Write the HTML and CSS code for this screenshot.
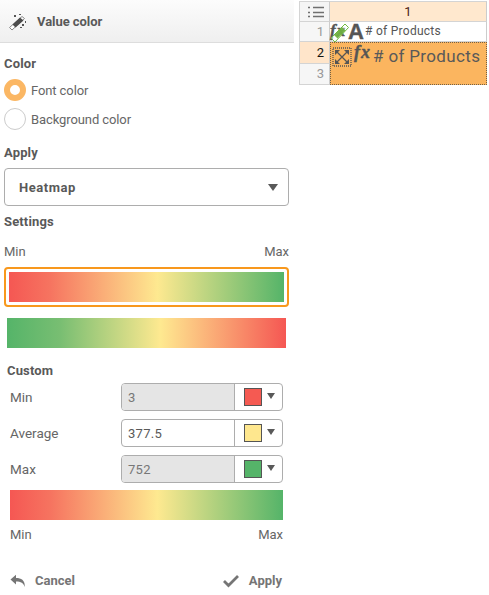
FILE: index.html
```html
<!DOCTYPE html>
<html lang="en">
<head>
<meta charset="utf-8">
<title>Value color</title>
<link rel="stylesheet" href="styles.css">
</head>
<body>
<main class="app">
  <section class="panel">
    <header class="panel-header">
      <svg class="wand" width="20" height="18" viewBox="0 0 20 18"><path d="M1.500 14.500 14 3.500l2.500 2L4 17z" fill="#fff" stroke="#888"/><path d="m4.500 11.500 7.500-7 3.500 3-8 7z" fill="#4c4c4c"/><path d="M6 2h2v2H6zM11 1h2v1h-2zM14 11h2v2h-2zM12 14h2v1h-2zM17 8h1v2h-1z" fill="#555"/></svg>
      <span class="title">Value color</span>
    </header>
    <h2 class="label color-label">Color</h2>
    <div class="radio"><i class="dot on"></i><span class="t-font">Font color</span></div>
    <div class="radio"><i class="dot"></i><span class="t-back">Background color</span></div>
    <h2 class="label apply-label">Apply</h2>
    <div class="select"><span class="t-heat">Heatmap</span><i class="caret"></i></div>
    <h2 class="label settings-label">Settings</h2>
    <div class="range"><span>Min</span><span>Max</span></div>
    <div class="choice"><div class="bar"></div></div>
    <div class="bar reverse"></div>
    <h2 class="label custom-label">Custom</h2>
    <div class="fields">
      <div class="field"><span class="name">Min</span><div class="control"><span class="value off">3</span><span class="pick"><i class="swatch red"></i><i class="caret small"></i></span></div></div>
      <div class="field"><span class="name">Average</span><div class="control"><span class="value">377.5</span><span class="pick"><i class="swatch yellow"></i><i class="caret small"></i></span></div></div>
      <div class="field"><span class="name">Max</span><div class="control"><span class="value off">752</span><span class="pick"><i class="swatch green"></i><i class="caret small"></i></span></div></div>
    </div>
    <div class="bar preview"></div>
    <div class="range bottom"><span>Min</span><span>Max</span></div>
    <footer class="actions">
      <span class="action"><svg width="15" height="14" viewBox="0 0 15 14"><path d="M.5 5.500 6 .8V4c5.800 0 9.300 2.700 8.700 9C13.500 9 11 7.500 6 7.500v3z" fill="#757575"/></svg><span>Cancel</span></span>
      <span class="action"><svg width="16" height="14" viewBox="0 0 16 14"><path d="m1 7 4.500 4.500L15 2" fill="none" stroke="#757575" stroke-width="2.800"/></svg><span>Apply</span></span>
    </footer>
  </section>
  <section class="sheet">
    <div class="cell menu"><svg width="17" height="12" viewBox="0 0 17 12"><path d="M0 1.500h2M0 6.500h2M0 10.500h2M5 1.500h11M5 6.500h11M5 10.500h11" stroke="#707070" stroke-width="1.300"/></svg></div>
    <div class="cell col">1</div>
    <div class="cell num">1</div>
    <div class="cell first"><span class="fx mini">fx<svg class="brush" width="20" height="20" viewBox="0 0 20 20"><path d="M1 15 15 1l3.500 3.500L5 19z" fill="#fff" fill-opacity=".4" stroke="#72bb42"/><path d="m4 12 8-8 3.500 3.500-8 8z" fill="#67ad38" fill-opacity=".9"/></svg></span><b class="letter">A</b><span class="t-products">#&nbsp;of Products</span></div>
    <div class="cell num current">2</div>
    <div class="cell selected"><svg class="expand" width="20" height="20" viewBox="0 0 20 20"><path d="M1 1h18v18H1z" fill="none" stroke="#555" stroke-width="1.300" stroke-dasharray="1 1"/><path d="m4 4 12 12M16 4 4 16" stroke="#555" stroke-width="1.300"/><path d="M3 3h5L3 8zM17 3v5l-5-5zM3 17v-5l5 5zM17 17h-5l5-5z" fill="#555"/></svg><span class="fx large">fx</span><span class="t-large">#&nbsp;of Products</span></div>
    <div class="cell num">3</div>
  </section>
</main>
</body>
</html>
```
FILE: styles.css
```css
* { box-sizing: border-box; }
body { margin: 0; background: #fff; color: #595959; font: 13px/18px Roboto, sans-serif; }
.app { display: flex; width: 489px; height: 595px; overflow: hidden; }
.panel { width: 294px; height: 595px; flex: none; }
.panel-header { display: flex; align-items: center; height: 43px; padding: 1px 0 0 8px; background: linear-gradient(#fcfcfc, #efefef); border-bottom: 1px solid #ddd; }
.title { margin-left: 9px; font-weight: 700; letter-spacing: -.05px; }
.label { height: 18px; margin: 0 0 0 4px; font: 700 13px/18px Roboto, sans-serif; letter-spacing: .15px; }
.color-label { margin-top: 12px; }
.radio { display: flex; align-items: center; height: 22px; margin: 6px 0 0 4px; color: #666; }
.dot { width: 22px; height: 22px; margin-right: 5px; border: 1px solid #ccc; border-radius: 50%; }
.dot.on { border: 6px solid #fbb764; }
.radio + .radio { margin-top: 7px; }
.t-font, .t-back { padding-top: 1px; letter-spacing: -.1px; }
.apply-label { margin-top: 14px; }
.select { display: flex; align-items: center; justify-content: space-between; width: 285px; height: 38px; margin: 6px 0 0 4px; padding: 0 10px 0 14px; border: 1px solid #adadad; border-radius: 4px; font-weight: 700; }
.t-heat { padding-top: 1px; letter-spacing: .55px; }
.caret { border: 5px solid transparent; border-top: 7px solid #595959; border-bottom: 0; }
.settings-label { margin-top: 7px; }
.range { display: flex; justify-content: space-between; width: 285px; margin: 12px 0 0 4px; color: #666; }
.bar { height: 30px; background: linear-gradient(90deg, #f55753, #f67460 15%, #fee990 54%, #55b469); }
.choice { width: 285px; height: 40px; margin: 6px 0 0 4px; padding: 3px; border: 2px solid #f8981d; border-radius: 4px; }
.reverse { width: 279px; margin: 11px 0 0 7px; background: linear-gradient(90deg, #55b469, #78be72 19%, #fee990 55%, #f55753); }
.custom-label { margin: 14px 0 0 7px; }
.fields { display: grid; gap: 8px; margin: 3px 0 0 10px; }
.field { display: flex; align-items: center; height: 28px; width: 273px; color: #595959; }
.name { width: 111px; flex: none; padding-bottom: 1px; font-size: 13.5px; color: #666; }
.control { display: flex; width: 162px; height: 28px; overflow: hidden; border: 1px solid #adadad; border-radius: 4px; }
.value { width: 112px; padding-left: 6px; line-height: 28px; letter-spacing: .3px; }
.off { background: #e5e5e5; color: #777; }
.pick { display: flex; align-items: center; flex: 1; padding-left: 9px; border-left: 1px solid #adadad; }
.swatch { width: 18px; height: 18px; margin-right: 5px; border: 1px solid #555; }
.red { background: #f55a52; }
.yellow { background: #fee78e; }
.green { background: #55b469; }
.small { margin-top: -2px; border-left-width: 4.5px; border-right-width: 4.5px; border-top-width: 6px; }
.preview { width: 273px; margin: 7px 0 0 10px; }
.range.bottom { width: 273px; margin: 6px 0 0 10px; }
.actions { display: flex; justify-content: space-between; align-items: center; width: 272px; height: 18px; margin: 28px 0 0 10px; color: #757575; font-weight: 700; }
.action { display: flex; align-items: center; gap: 10px; }
.sheet { display: grid; grid-template-columns: 31px 157px; grid-template-rows: 21px 20px 22px 21px; width: 188px; height: 85px; margin: 1px 0 0 5px; }
.cell { display: flex; align-items: center; border-right: 1px solid #ccc; border-bottom: 1px solid #d4d4d4; white-space: nowrap; }
.menu { padding-left: 8px; background: #f5f5f5; border-top: 1px solid #d4d4d4; border-left: 1px solid #d4d4d4; }
.col { justify-content: center; background: #ffe8ce; border-top: 1px solid #d4d4d4; color: #4a1c14; font-size: 13px; }
.num { justify-content: flex-end; padding-right: 5px; background: #f6f6f6; border-left: 1px solid #d4d4d4; color: #999; }
.num.current { background: #ffe5ca; color: #111; }
.first { font-size: 12px; color: #555; }
.t-products { padding-bottom: 2px; letter-spacing: .27px; }
.selected { grid-column: 2; grid-row: 3 / span 2; align-items: flex-start; background: #fbb55f; border: 1px dotted #746044; }
.expand { margin: 4px 0 0 1px; }
.fx { position: relative; font: italic 700 18px/18px "Liberation Serif", serif; color: #555; letter-spacing: 1px; -webkit-text-stroke: .4px #555; }
.large { width: 19px; margin: 0 0 0 2px; }
.mini { width: 18px; height: 18px; font-size: 17px; line-height: 16px; }
.brush { position: absolute; left: 0; top: 0; }
.letter { width: 17px; font: 700 22px/18px "Liberation Sans", sans-serif; -webkit-text-stroke: .4px #555; }
.t-large { font-size: 17px; line-height: 26px; letter-spacing: .35px; }
```
